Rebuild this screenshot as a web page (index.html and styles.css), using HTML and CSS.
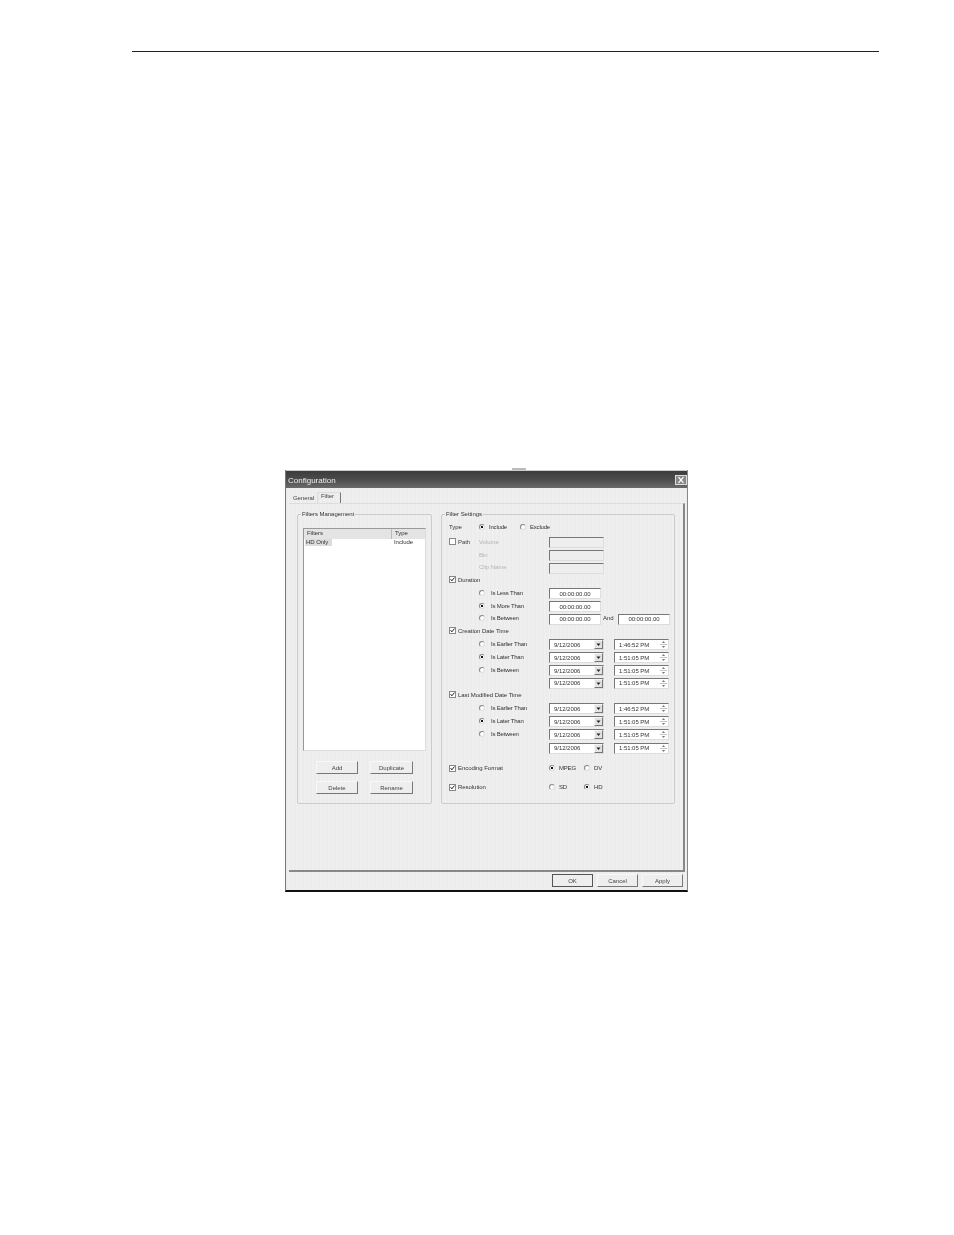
FILE: index.html
```html
<!DOCTYPE html>
<html lang="en">
<head>
<meta charset="utf-8">
<title>Configuration</title>
<link rel="stylesheet" href="styles.css">
</head>
<body>
<svg class="defs" width="0" height="0" aria-hidden="true">
  <symbol id="chk" viewBox="0 0 7 7"><path d="M.8 3 L2.6 5.4 L6.2 .8" fill="none" stroke="#222" stroke-width="1.4"/></symbol>
  <symbol id="dn" viewBox="0 0 7 7"><path d="M1.5 2.5 H5.5 L3.5 5 Z" fill="#222"/></symbol>
  <symbol id="spin" viewBox="0 0 9 11"><path d="M4.5 1.5 L6.5 3.5 H2.5 Z M2.5 7.5 H6.5 L4.5 9.5 Z" fill="#555"/><path d="M0 5.5 H9" stroke="#999" stroke-width=".7"/></symbol>
  <symbol id="x" viewBox="0 0 12 10"><path d="M3 1.5 L9 8.5 M9 1.5 L3 8.5" stroke="#fff" stroke-width="1.6"/></symbol>
</svg>
<header class="rule"></header>
<main class="dialog">
  <div class="title"><span>Configuration</span><svg class="close"><use href="#x"/></svg></div>
  <div class="tabs"><span class="tab">General</span><span class="tab on">Filter</span></div>
  <div class="panel">
    <section class="group left">
      <h2>Filters Management</h2>
      <div class="list">
        <div class="lhead"><span>Filters</span><span>Type</span></div>
        <div class="lrow"><span class="sel">HD Only</span><span>Include</span></div>
      </div>
      <div class="btns">
        <button>Add</button><button>Duplicate</button>
        <button>Delete</button><button>Rename</button>
      </div>
    </section>
    <section class="group right">
      <h2>Filter Settings</h2>
      <div class="row r16"><span class="lab type">Type</span><i class="rad dot"></i><span class="opt w30">Include</span><i class="rad"></i><span class="opt">Exclude</span></div>
      <div class="row"><i class="cb"></i><span class="lab path">Path</span><span class="dim">Volume</span><b class="fld off"></b></div>
      <div class="row"><span class="dim ind">Bin</span><b class="fld off"></b></div>
      <div class="row r12"><span class="dim ind">Clip Name</span><b class="fld off"></b></div>
      <div class="row"><i class="cb"><svg><use href="#chk"/></svg></i><span class="lab">Duration</span></div>
      <div class="row"><i class="rad ir"></i><span class="opt ol">Is Less Than</span><b class="fld dur">00:00:00.00</b></div>
      <div class="row"><i class="rad ir dot"></i><span class="opt ol">Is More Than</span><b class="fld dur">00:00:00.00</b></div>
      <div class="row r12"><i class="rad ir"></i><span class="opt ol">Is Between</span><b class="fld dur">00:00:00.00</b><span class="and">And</span><b class="fld dur">00:00:00.00</b></div>
      <div class="row"><i class="cb"><svg><use href="#chk"/></svg></i><span class="lab">Creation Date Time</span></div>
      <div class="row"><i class="rad ir"></i><span class="opt ol">Is Earlier Than</span><b class="fld date">9/12/2006<em><svg><use href="#dn"/></svg></em></b><b class="fld time">1:46:52 PM<svg><use href="#spin"/></svg></b></div>
      <div class="row"><i class="rad ir dot"></i><span class="opt ol">Is Later Than</span><b class="fld date">9/12/2006<em><svg><use href="#dn"/></svg></em></b><b class="fld time">1:51:05 PM<svg><use href="#spin"/></svg></b></div>
      <div class="row r14"><i class="rad ir"></i><span class="opt ol">Is Between</span><b class="fld date">9/12/2006<em><svg><use href="#dn"/></svg></em></b><b class="fld time">1:51:05 PM<svg><use href="#spin"/></svg></b></div>
      <div class="row r11"><span class="ol2"></span><b class="fld date">9/12/2006<em><svg><use href="#dn"/></svg></em></b><b class="fld time">1:51:05 PM<svg><use href="#spin"/></svg></b></div>
      <div class="row"><i class="cb"><svg><use href="#chk"/></svg></i><span class="lab">Last Modified Date Time</span></div>
      <div class="row"><i class="rad ir"></i><span class="opt ol">Is Earlier Than</span><b class="fld date">9/12/2006<em><svg><use href="#dn"/></svg></em></b><b class="fld time">1:46:52 PM<svg><use href="#spin"/></svg></b></div>
      <div class="row"><i class="rad ir dot"></i><span class="opt ol">Is Later Than</span><b class="fld date">9/12/2006<em><svg><use href="#dn"/></svg></em></b><b class="fld time">1:51:05 PM<svg><use href="#spin"/></svg></b></div>
      <div class="row r14"><i class="rad ir"></i><span class="opt ol">Is Between</span><b class="fld date">9/12/2006<em><svg><use href="#dn"/></svg></em></b><b class="fld time">1:51:05 PM<svg><use href="#spin"/></svg></b></div>
      <div class="row r20"><span class="ol2"></span><b class="fld date">9/12/2006<em><svg><use href="#dn"/></svg></em></b><b class="fld time">1:51:05 PM<svg><use href="#spin"/></svg></b></div>
      <div class="row r19"><i class="cb"><svg><use href="#chk"/></svg></i><span class="lab wide">Encoding Format</span><i class="rad dot"></i><span class="opt w26">MPEG</span><i class="rad"></i><span class="opt">DV</span></div>
      <div class="row"><i class="cb"><svg><use href="#chk"/></svg></i><span class="lab wide">Resolution</span><i class="rad"></i><span class="opt w26">SD</span><i class="rad dot"></i><span class="opt">HD</span></div>
    </section>
  </div>
  <footer class="foot"><button class="def">OK</button><button>Cancel</button><button>Apply</button></footer>
</main>
</body>
</html>
```
FILE: styles.css
```css
* { box-sizing: border-box; }
html, body { margin: 0; height: 1235px; overflow: hidden; background: #fff; }
body { font-family: "Liberation Sans", Arial, sans-serif; color: #333; }
.defs { position: absolute; }
.rule { height: 1px; margin: 51px 75px 0 132px; background: #222; }
.dialog {
  width: 403px; height: 422px; margin: 418px 0 0 285px;
  display: flex; flex-direction: column;
  background: repeating-linear-gradient(90deg, #ececec 0 2px, #efefef 2px 4px);
  border-left: 1px solid #777; border-right: 1px solid #888; border-bottom: 2px solid #111;
  filter: blur(.4px);
  font-size: 6px; letter-spacing: -.05px;
  position: relative;
}
.dialog::before { content: ""; position: absolute; top: -2px; left: 226px; width: 14px; height: 2px; background: #bbb; }
.title {
  height: 18px; flex: none; padding: 1px 0 0 2px;
  display: flex; align-items: center; justify-content: space-between;
  background: linear-gradient(#3c3c3c, #4a4a4a 45%, #6a6a6a);
  border-top: 1px solid #ccc;
  color: #eee; font-size: 8px; letter-spacing: 0;
}
.close { width: 12px; height: 10px; background: #888; border: 1px solid #ddd; }
.tabs { height: 15px; flex: none; padding: 4px 0 0 3px; display: flex; align-items: flex-end; position: relative; }
.tab { padding: 0 4px 2px; color: #444; }
.tab.on { width: 24px; height: 11px; padding: 0 0 0 3px; margin-left: -1px; border-right: 1px solid #777; border-left: 1px solid #ddd; border-top: 1px solid #ddd; }
.panel {
  flex: 1; margin: 0 2px 0 3px; padding: 10px 8px 0 8px;
  display: flex; gap: 9px; align-items: flex-start;
  border-top: 1px solid #ddd; border-right: 2px solid #888; border-bottom: 2px solid #888;
}
.group { position: relative; height: 290px; border: 1px solid #ccc; border-radius: 2px; }
.group h2 { position: absolute; top: -4px; left: 3px; margin: 0; padding: 0 1px; font: inherit; line-height: 7px; background: #eee; }
.left { width: 135px; padding: 13px 5px 0; }
.right { width: 235px; padding: 4px 0 0 7px; }
.list { height: 223px; width: 123px; background: #fff; border: 1px solid #999; border-right-color: #ddd; border-bottom-color: #ddd; }
.lhead { height: 10px; display: flex; background: #e4e4e4; line-height: 9px; }
.lhead span:first-child { width: 87px; padding-left: 3px; }
.lhead span:last-child { flex: 1; padding-left: 3px; border-left: 1px solid #bbb; }
.lrow { display: flex; line-height: 7px; }
.lrow span:first-child { margin-left: 1px; width: 89px; }
.lrow .sel { padding-left: 1px; background: linear-gradient(90deg, #ddd 0 27px, #fff 27px); }
.btns { margin: 10px 0 0 13px; display: grid; grid-template-columns: 42px 43px; column-gap: 12px; row-gap: 7px; }
button {
  height: 13px; padding: 0; font: inherit; color: #444;
  background: #eee; border: 1px solid; border-color: #f8f8f8 #777 #777 #f8f8f8;
}
.row { height: 13px; display: flex; align-items: center; white-space: nowrap; }
.r16 { height: 16px; }
.r14 { height: 13.5px; }
.r11 { height: 11.5px; }
.r12 { height: 12px; }
.r20 { margin-bottom: 8px; }
.r19 { margin-bottom: 6px; }
.cb { width: 7px; height: 7px; flex: none; background: #fff; border: 1px solid #888; margin-right: 2px; }
.cb svg { display: block; width: 5px; height: 5px; }
.rad { width: 6px; height: 6px; flex: none; border-radius: 50%; background: #fff; border: 1px solid; border-color: #888 #ddd #ddd #888; margin-right: 4px; }
.rad.dot { background: radial-gradient(circle, #111 0 1.1px, #fff 1.4px); }
.ir { margin-left: 30px; margin-right: 6px; }
.opt { letter-spacing: -.2px; }
.ol { width: 58px; }
.ol2 { width: 100px; flex: none; }
.lab.type { width: 30px; }
.lab.path { width: 14px; color: #444; }
.lab.wide { width: 91px; }
.w30 { width: 24px; margin-right: 7px; }
.w26 { width: 25px; }
.dim { color: #b4b4b4; width: 70px; flex: none; }
.dim.ind { margin-left: 30px; }
.row .path + .dim { margin-left: 7px; }
.fld {
  height: 11px; margin-top: 2px; font-weight: 400; display: flex; align-items: center; justify-content: center;
  background: #fff; border: 1px solid; border-color: #777 #ddd #ddd #777; flex: none; position: relative;
}
.fld.off { width: 55px; background: #eee; }
.dur { width: 52px; }
.and { width: 17px; flex: none; padding-left: 2px; }
.date, .time { justify-content: flex-start; padding-left: 4px; }
.date { width: 55px; margin-right: 10px; }
.time { width: 55px; }
.date em { position: absolute; right: 0; top: 0; width: 9px; height: 9px; background: #e2e2e2; border: 1px solid; border-color: #f5f5f5 #777 #777 #f5f5f5; display: block; }
.date em svg { display: block; width: 7px; height: 7px; }
.time svg { position: absolute; right: 0; top: 0; width: 9px; height: 9px; }
.foot { height: 18px; flex: none; padding: 2px 2px 0 266px; display: flex; gap: 4px; }
.foot button { width: 41px; height: 13px; }
.foot .def { border: 1px solid #555; }
```
